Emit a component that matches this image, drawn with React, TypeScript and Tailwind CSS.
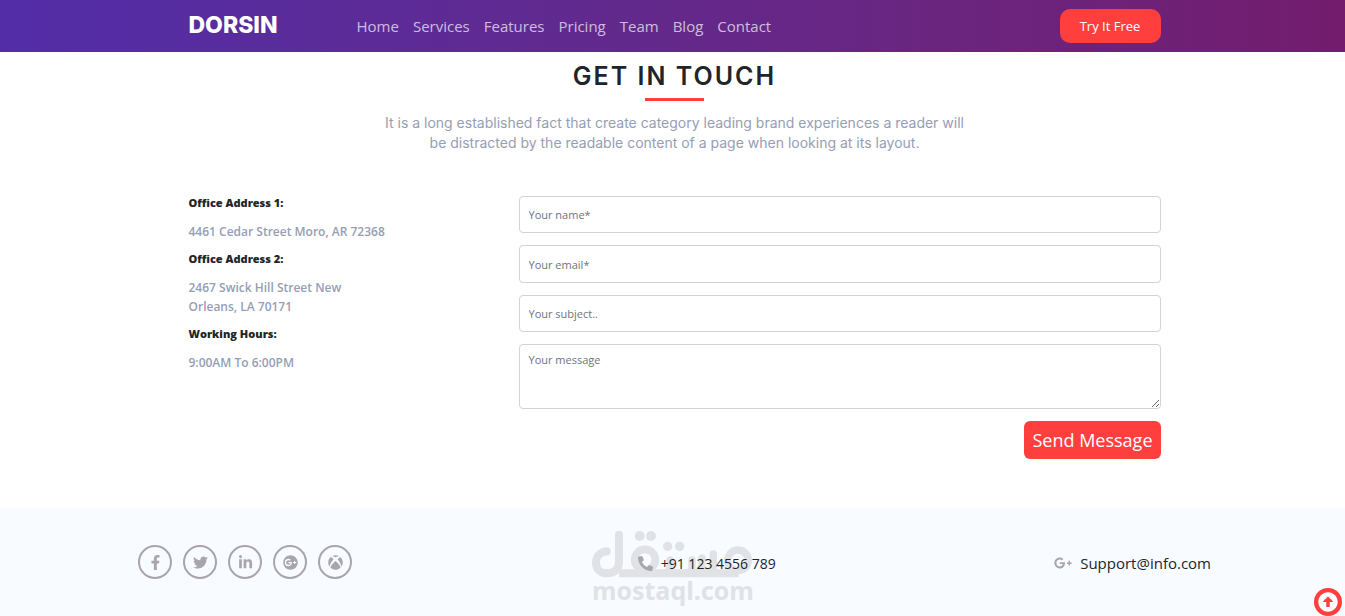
import React from "react";
import {
  FaFacebookF,
  FaTwitter,
  FaLinkedinIn,
  FaGooglePlus,
  FaXbox,
  FaPhoneAlt,
  FaGooglePlusG,
  FaArrowAltCircleUp,
} from "react-icons/fa";

const links = ["Home", "Services", "Features", "Pricing", "Team", "Blog", "Contact"];

const info = [
  { title: "Office Address 1:", lines: ["4461 Cedar Street Moro, AR 72368"] },
  { title: "Office Address 2:", lines: ["2467 Swick Hill Street New", "Orleans, LA 70171"] },
  { title: "Working Hours:", lines: ["9:00AM To 6:00PM"] },
];

const socials = [
  { name: "Facebook", Icon: FaFacebookF },
  { name: "Twitter", Icon: FaTwitter },
  { name: "LinkedIn", Icon: FaLinkedinIn },
  { name: "Google Plus", Icon: FaGooglePlus },
  { name: "Xbox", Icon: FaXbox },
];

const field =
  "block w-full rounded border border-[#ced4da] bg-white px-[9px] text-[11px] leading-[18px] text-[#212529] placeholder:text-[#6c757d] outline-none focus:border-[#ff3e3e]";

function Header() {
  return (
    <header className="bg-linear-to-r from-[#522da8] to-[#731c6e]">
      <div className="mx-auto flex h-[52px] max-w-[976px] items-center pl-1">
        <a href="#home" className="w-[168px] pb-0.5 font-['Inter'] text-[23px] leading-[30px] font-extrabold text-white">
          DORSIN
        </a>
        <nav className="flex flex-1 gap-[14px] text-[15px] leading-6 text-white/70">
          {links.map((l) => (
            <a key={l} href={"#" + l.toLowerCase()} className="hover:text-white">
              {l}
            </a>
          ))}
        </nav>
        <button type="button" className="h-[34px] w-[101px] rounded-[10px] bg-[#ff3e3e] pt-0.5 text-[13px] text-white">
          Try It Free
        </button>
      </div>
    </header>
  );
}

function ContactForm() {
  return (
    <form className="flex flex-col gap-3" onSubmit={(e) => e.preventDefault()}>
      <input aria-label="Your name" type="text" placeholder="Your name*" className={field + " h-[37px]"} />
      <input aria-label="Your email" type="email" placeholder="Your email*" className={field + " h-[38px]"} />
      <input aria-label="Your subject" type="text" placeholder="Your subject.." className={field + " h-[37px]"} />
      <textarea aria-label="Your message" placeholder="Your message" className={field + " h-[65px] resize-y py-[6px]"} />
      <button type="submit" className="h-[38px] self-end rounded-md bg-[#ff3e3e] px-2 text-[18px] text-white">
        Send Message
      </button>
    </form>
  );
}

function Watermark() {
  return (
    <div className="pointer-events-none absolute top-[22px] left-[592px] w-40 text-[#e0e2e5]">
      <svg viewBox="0 0 480 144" className="block h-12 w-40" fill="none" stroke="currentColor" strokeWidth="24" strokeLinecap="round" aria-hidden="true">
        <path d="M44 64C22 66 12 82 12 98C12 118 26 130 46 130C68 130 81 116 81 96V14" />
        <path d="M81 130H440" strokeLinecap="butt" />
        <circle cx="159" cy="89" r="31" strokeWidth="23" />
        <path d="M234 90V110Q234 130 214 130M300 90V110Q300 130 280 130M330 84V104Q330 130 306 130M364 72V104Q364 130 340 130" strokeWidth="22" />
        <circle cx="438" cy="91" r="31" strokeWidth="22" />
        <g fill="currentColor" stroke="none">
          <circle cx="143" cy="18" r="15" />
          <circle cx="177" cy="18" r="15" />
          <circle cx="227" cy="49" r="14" />
          <circle cx="263" cy="49" r="14" />
        </g>
      </svg>
      <div className="text-center font-['Open_Sans'] text-[25px] leading-6 font-bold">mostaql.com</div>
    </div>
  );
}

export default function App() {
  return (
    <div className="min-h-screen bg-white font-['Open_Sans',sans-serif] text-[#212529]">
      <Header />
      <main className="mx-auto max-w-[976px] pb-[49px] pl-1">
        <div className="flex flex-col items-center pt-2 text-center font-['Inter']">
          <h1 className="text-[25px] leading-8 font-semibold tracking-[2px]">GET IN TOUCH</h1>
          <div className="mt-1.5 h-[3px] w-[59px] bg-[#ff3e3e]" />
          <p className="mt-3 text-[14px] leading-5 text-[#959eb4]">
            It is a long established fact that create category leading brand experiences a reader will
            <br />
            be distracted by the readable content of a page when looking at its layout.
          </p>
        </div>
        <div className="mt-[43px] grid grid-cols-[1fr_2fr] gap-[9px]">
          <dl>
            {info.map((i) => (
              <div key={i.title} className="mb-[11px]">
                <dt className="text-[11px] leading-[14px] font-extrabold">{i.title}</dt>
                <dd className="mt-3 text-[12px] leading-[19px] font-semibold text-[#959eb4]">
                  {i.lines.map((l) => (
                    <div key={l}>{l}</div>
                  ))}
                </dd>
              </div>
            ))}
          </dl>
          <ContactForm />
        </div>
      </main>
      <footer className="relative bg-[#f8fbff]">
        <Watermark />
        <div className="relative mx-auto grid h-[108px] max-w-[1077px] grid-cols-[6fr_5fr_auto] items-center pl-1">
          <div className="flex gap-[11px]">
            {socials.map(({ name, Icon }) => (
              <a key={name} href="#social" aria-label={name} className="flex size-[34px] items-center justify-center rounded-full border-2 border-[#a9a5ac] text-[15px] text-[#a9a5ac]">
                <Icon />
              </a>
            ))}
          </div>
          <a href="tel:+911234556789" className="flex items-center gap-2 pt-0.5 text-[14px] font-medium">
            <FaPhoneAlt className="text-[15px] text-[#a9a5ac]" />
            +91 123 4556 789
          </a>
          <a href="mailto:Support@info.com" className="flex items-center gap-2 pt-0.5 text-[15px] font-medium">
            <FaGooglePlusG className="text-[18px] text-[#a9a5ac]" />
            Support@info.com
          </a>
        </div>
      </footer>
      <a href="#home" aria-label="Back to top" className="fixed right-[3px] bottom-0 flex size-7 items-center justify-center rounded-full bg-[#ff3e3e] text-[20px] text-white">
        <FaArrowAltCircleUp />
      </a>
    </div>
  );
}
